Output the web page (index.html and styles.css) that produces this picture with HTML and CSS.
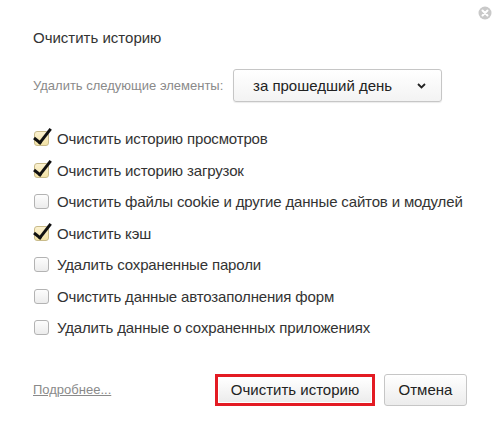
FILE: index.html
```html
<!DOCTYPE html>
<html lang="ru">
<head>
<meta charset="utf-8">
<title>Очистить историю</title>
<link rel="stylesheet" href="styles.css">
</head>
<body>
<div class="dialog">
  <button class="close" aria-label="Закрыть">
    <svg width="14" height="14" viewBox="0 0 14 14"><circle cx="7" cy="7" r="6.5" fill="#c9c9c9"/><path d="M4.5 4.5 L9.5 9.5 M9.5 4.5 L4.5 9.5" stroke="#fff" stroke-width="2" stroke-linecap="round"/></svg>
  </button>
  <h1 class="title">Очистить историю</h1>
  <div class="period">
    <span class="period-label">Удалить следующие элементы:</span>
    <div class="select">
      <span>за прошедший день</span>
      <svg class="chev" width="9" height="6" viewBox="0 0 9 6"><path d="M1 1 L4.5 4.5 L8 1" fill="none" stroke="#222" stroke-width="1.8"/></svg>
    </div>
  </div>
  <ul class="options">
    <li class="opt checked"><span class="box"></span>Очистить историю просмотров</li>
    <li class="opt checked"><span class="box"></span>Очистить историю загрузок</li>
    <li class="opt"><span class="box"></span>Очистить файлы cookie и другие данные сайтов и модулей</li>
    <li class="opt checked"><span class="box"></span>Очистить кэш</li>
    <li class="opt"><span class="box"></span>Удалить сохраненные пароли</li>
    <li class="opt"><span class="box"></span>Очистить данные автозаполнения форм</li>
    <li class="opt"><span class="box"></span>Удалить данные о сохраненных приложениях</li>
  </ul>
  <div class="footer">
    <a class="more" href="#">Подробнее...</a>
    <div class="actions">
      <div class="highlight"><button class="btn">Очистить историю</button></div>
      <button class="btn">Отмена</button>
    </div>
  </div>
</div>
</body>
</html>
```

FILE: styles.css
```css
* { box-sizing: border-box; }
html, body { margin: 0; padding: 0; background: #fff; }
body {
  font-family: "Liberation Sans", Arial, sans-serif;
  color: #333;
  width: 495px;
  height: 424px;
  overflow: hidden;
  white-space: nowrap;
}
.dialog {
  position: relative;
  padding: 29px 28px 0 33px;
}
.close {
  position: absolute;
  top: 6px;
  left: 478px;
  width: 14px;
  height: 14px;
  padding: 0;
  border: 0;
  background: none;
  display: block;
}
.close svg { display: block; }
.title {
  margin: 0;
  font-size: 15px;
  font-weight: normal;
  line-height: 17px;
  color: #333;
}
.period {
  display: flex;
  align-items: center;
  margin-top: 23px;
}
.period-label {
  font-size: 13px;
  color: #8a8a8a;
  width: 200px;
  flex: none;
}
.select {
  width: 209px;
  height: 33px;
  border: 1px solid #c6c6c6;
  border-radius: 3px;
  background: linear-gradient(#fff, #f3f3f3);
  box-shadow: 0 1px 1px rgba(0,0,0,0.08);
  display: flex;
  align-items: center;
  justify-content: space-between;
  padding: 0 15px 0 19px;
  font-size: 15px;
  color: #222;
  flex: none;
}
.chev { display: block; margin-top: 1px; }
.options {
  list-style: none;
  margin: 21px 0 0;
  padding: 0;
}
.opt {
  height: 31.5px;
  display: flex;
  align-items: center;
  font-size: 15px;
  letter-spacing: -0.15px;
  color: #333;
  position: relative;
}
.box {
  width: 15px;
  height: 15px;
  border: 1px solid #b3b3b3;
  border-radius: 3px;
  background: linear-gradient(#fdfdfd, #ececec);
  margin: 0 8px 0 1px;
  position: relative;
  flex: none;
}
.checked .box {
  background: linear-gradient(#fbf1cf, #f2e2a6);
  border-color: #c9bb8a;
}
.checked .box::after {
  content: "";
  position: absolute;
  left: 3px;
  top: -7px;
  width: 6px;
  height: 16px;
  border-right: 3px solid #111;
  border-bottom: 3px solid #111;
  transform: rotate(38deg);
  transform-origin: center;
}
.footer {
  display: flex;
  align-items: center;
  justify-content: space-between;
  margin-top: 30px;
}
.more {
  font-size: 13px;
  color: #8a8a8a;
  text-decoration: underline;
}
.actions {
  display: flex;
  align-items: center;
  gap: 9px;
}
.highlight {
  border: 3px solid #e31b23;
  padding: 1px;
}
.btn {
  font-family: "Liberation Sans", Arial, sans-serif;
  font-size: 15px;
  color: #222;
  padding: 0;
  border: 1px solid #c6c6c6;
  border-radius: 3px;
  background: linear-gradient(#fff, #ececec);
  white-space: nowrap;
}
.highlight .btn {
  border: 0;
  width: 152px;
  height: 24px;
  border-radius: 0;
  display: block;
}
.actions > .btn {
  width: 83px;
  height: 32px;
}
```
